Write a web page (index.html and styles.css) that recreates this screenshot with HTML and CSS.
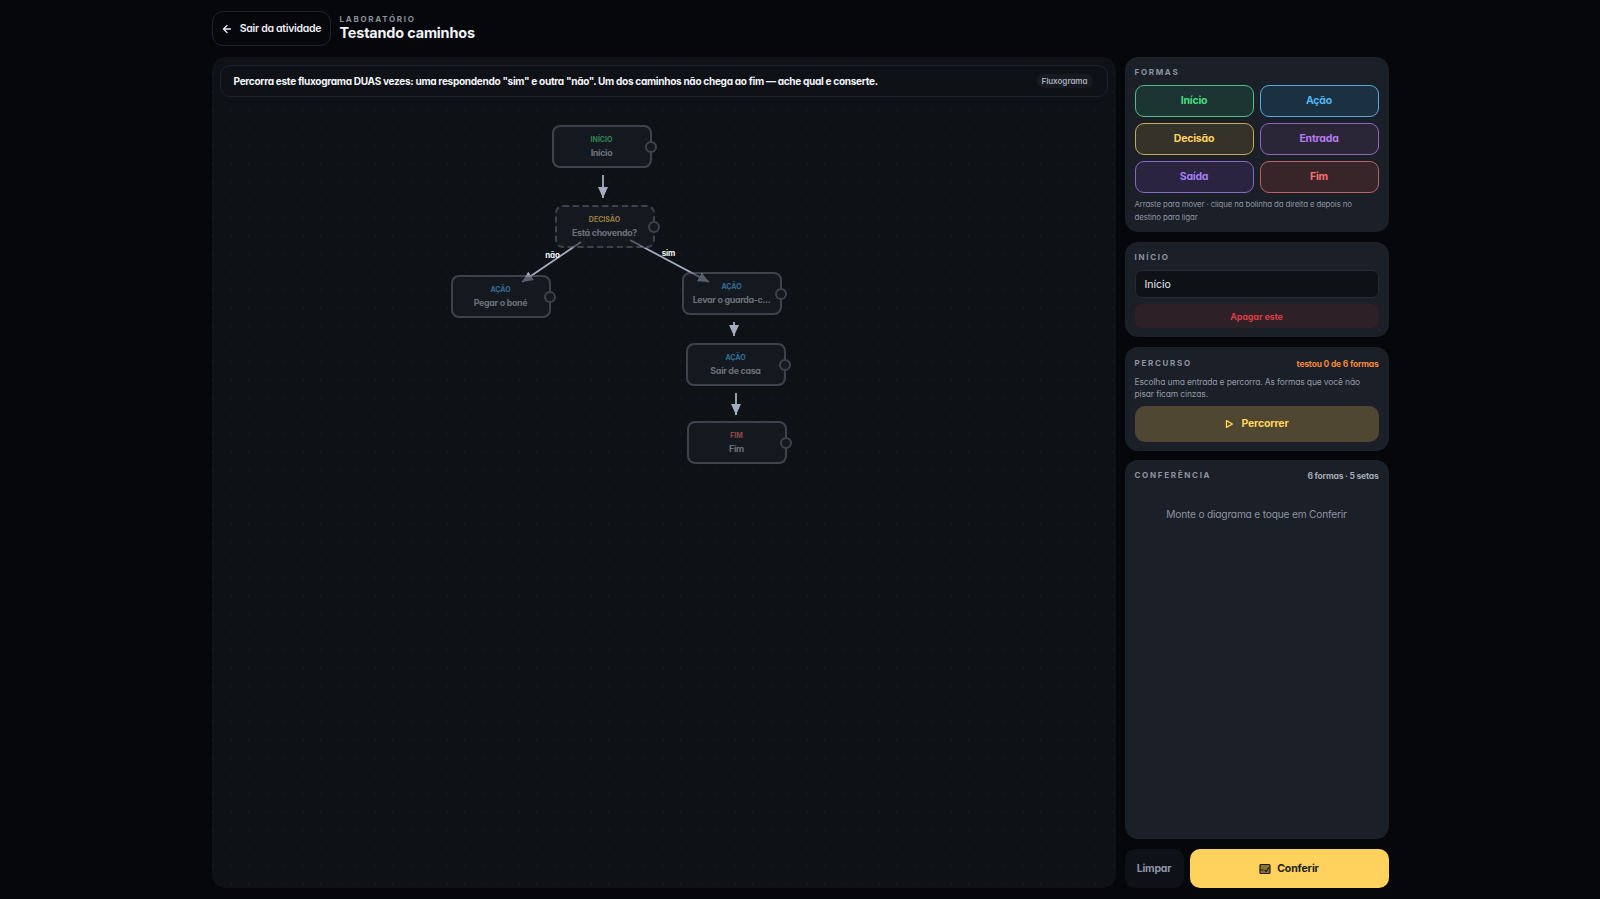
FILE: index.html
```html
<!DOCTYPE html>
<html lang="pt-BR">
<head>
    <meta charset="UTF-8">
    <title>Testando caminhos</title>
    <link rel="stylesheet" href="styles.css">
</head>
<body>
    <div class="page">
        <header class="topbar">
            <button class="back-btn">
                <svg width="12" height="12" viewBox="0 0 24 24" fill="none" stroke="currentColor" stroke-width="2.6" stroke-linecap="round" stroke-linejoin="round"><path d="M19 12H5M12 19l-7-7 7-7"/></svg>
                Sair da atividade
            </button>
            <div class="title-block">
                <div class="eyebrow">LABORATÓRIO</div>
                <h1>Testando caminhos</h1>
            </div>
        </header>

        <div class="workspace">
            <!-- Canvas -->
            <main class="board">
                <div class="banner">
                    <p>Percorra este fluxograma DUAS vezes: uma respondendo "sim" e outra "não". Um dos caminhos não chega ao fim — ache qual e conserte.</p>
                    <span class="badge">Fluxograma</span>
                </div>
                <div class="stage">
                    <svg class="arrows" width="880" height="780">
                        <defs>
                            <marker id="head" markerUnits="userSpaceOnUse" markerWidth="12" markerHeight="10" refX="11" refY="5" orient="auto">
                                <path d="M0 0L11 5L0 10Z" fill="#a4adbf"/>
                            </marker>
                        </defs>
                        <line x1="383" y1="78" x2="383" y2="101" marker-end="url(#head)"/>
                        <line x1="361" y1="145" x2="302" y2="185" marker-end="url(#head)"/>
                        <line x1="410" y1="143" x2="489" y2="185" marker-end="url(#head)"/>
                        <line x1="514" y1="225" x2="514" y2="239" marker-end="url(#head)"/>
                        <line x1="516" y1="296" x2="516" y2="318" marker-end="url(#head)"/>
                    </svg>
                    <span class="edge-label edge-nao">não</span>
                    <span class="edge-label edge-sim">sim</span>

                    <div class="node node-1"><small class="c-green">INÍCIO</small><b>Início</b><i></i></div>
                    <div class="node node-2 dashed"><small class="c-yellow">DECISÃO</small><b>Está chovendo?</b><i></i></div>
                    <div class="node node-3"><small class="c-blue">AÇÃO</small><b>Pegar o boné</b><i></i></div>
                    <div class="node node-4"><small class="c-blue">AÇÃO</small><b>Levar o guarda-c...</b><i></i></div>
                    <div class="node node-5"><small class="c-blue">AÇÃO</small><b>Sair de casa</b><i></i></div>
                    <div class="node node-6"><small class="c-red">FIM</small><b>Fim</b><i></i></div>
                </div>
            </main>

            <!-- Side panels -->
            <aside class="side">
                <section class="card card-shapes">
                    <h4>FORMAS</h4>
                    <div class="shape-grid">
                        <button class="shape s-green">Início</button>
                        <button class="shape s-blue">Ação</button>
                        <button class="shape s-yellow">Decisão</button>
                        <button class="shape s-purple">Entrada</button>
                        <button class="shape s-violet">Saída</button>
                        <button class="shape s-red">Fim</button>
                    </div>
                    <p class="hint">Arraste para mover · clique na bolinha da direita e depois no destino para ligar</p>
                </section>

                <section class="card card-edit">
                    <h4>INÍCIO</h4>
                    <input class="text-input" type="text" value="Início">
                    <button class="delete-btn">Apagar este</button>
                </section>

                <section class="card card-route">
                    <div class="card-head">
                        <h4>PERCURSO</h4>
                        <span class="count-orange">testou 0 de 6 formas</span>
                    </div>
                    <p class="route-text">Escolha uma entrada e percorra. As formas que você não pisar ficam cinzas.</p>
                    <button class="run-btn">
                        <svg width="10" height="10" viewBox="0 0 24 24" fill="none" stroke="currentColor" stroke-width="3.4" stroke-linejoin="round"><path d="M6 4l14 8-14 8z"/></svg>
                        Percorrer
                    </button>
                </section>

                <section class="card card-check">
                    <div class="card-head">
                        <h4>CONFERÊNCIA</h4>
                        <span class="count-gray">6 formas · 5 setas</span>
                    </div>
                    <p class="empty">Monte o diagrama e toque em Conferir</p>
                </section>

                <div class="actions">
                    <button class="clear-btn">Limpar</button>
                    <button class="check-btn">
                        <svg width="12" height="12" viewBox="0 0 24 24" fill="#8a7434" stroke="currentColor" stroke-width="2.4" stroke-linecap="round" stroke-linejoin="round"><rect x="2" y="3" width="20" height="18" rx="2"/><path d="M2 14h6M12 15l2.5 2L19 10"/></svg>
                        Conferir
                    </button>
                </div>
            </aside>
        </div>
    </div>
</body>
</html>
```
FILE: styles.css
```css
* { box-sizing: border-box; }
html, body { height: 100%; }
body { margin: 0; background: #06070b; color: #f2f4f8; font-family: Inter, "Noto Sans", sans-serif; font-feature-settings: "cv11" 1; overflow: hidden; }
button { font-family: inherit; font-feature-settings: inherit; cursor: pointer; }

.page { width: 1177px; height: 899px; margin: 0 auto; padding: 11px 0; display: flex; flex-direction: column; }

/* Top bar */
.topbar { display: flex; align-items: center; gap: 9px; height: 35px; margin-bottom: 11px; }
.back-btn { width: 119px; height: 35px; display: flex; align-items: center; justify-content: center; gap: 7px; background: #06070b; color: #eceef3; border: 1px solid #1f232c; border-radius: 11px; font-size: 10.5px; font-weight: 600; letter-spacing: -.3px; padding: 0; }
.title-block { margin-top: -2px; }
.eyebrow { font-size: 8px; font-weight: 700; letter-spacing: 1.7px; color: #8a8f9b; line-height: 10px; }
h1 { margin: 0; font-size: 14.4px; line-height: 17px; font-weight: 700; color: #f2f4f8; font-feature-settings: normal; letter-spacing: -.15px; }

.workspace { flex: 1; display: flex; gap: 9px; min-height: 0; }

/* Canvas */
.board { width: 904px; padding: 8px; display: flex; flex-direction: column; border-radius: 14px; background-color: #0e1217; background-image: radial-gradient(#13171e 1px, transparent 1px); background-size: 18px 18px; background-position: -8px 8px; }
.banner { height: 32px; flex: none; display: flex; align-items: center; justify-content: space-between; padding: 0 14px 0 13px; border: 1px solid #1d222b; border-radius: 10px; background: #0e1217; }
.banner p { margin: 0 0 1px; font-size: 10.05px; font-weight: 700; letter-spacing: -.3px; color: #f2f4f8; }
.badge { width: 56px; height: 14px; display: flex; align-items: center; justify-content: center; border-radius: 7px; background: #161a21; color: #a7adb9; font-size: 8px; font-weight: 600; }

.stage { position: relative; flex: 1; }
.arrows { position: absolute; left: 0; top: 0; }
.arrows line { stroke: #a4adbf; stroke-width: 1.8; }
.edge-label { position: absolute; transform: translate(-50%, -50%); font-size: 8px; font-weight: 700; letter-spacing: -.2px; color: #f2f4f8; }
.edge-nao { left: 333px; top: 158px; }
.edge-sim { left: 449px; top: 156px; }

.node { position: absolute; width: 100px; height: 43px; display: flex; flex-direction: column; align-items: center; justify-content: center; gap: 3px; background: #1a1f28; border: 2px solid #666b77; border-radius: 8px; opacity: .55; }
.node small { font-size: 7px; line-height: 9px; font-weight: 700; }
.node b { font-size: 8.9px; line-height: 12px; font-weight: 700; letter-spacing: -.3px; color: #b8bcc6; white-space: nowrap; }
.node i { position: absolute; right: -7px; top: 50%; width: 12px; height: 12px; margin-top: -6px; border-radius: 50%; background: #1a1f28; border: 2px solid #666b77; }
.node.dashed { border-style: dashed; }
.node-1 { left: 332px; top: 28px; }
.node-2 { left: 335px; top: 108px; }
.node-3 { left: 231px; top: 178px; }
.node-4 { left: 462px; top: 175px; }
.node-5 { left: 466px; top: 246px; }
.node-6 { left: 467px; top: 324px; }
.c-green { color: #4ade80; }
.c-yellow { color: #ffd25e; }
.c-blue { color: #4fb6f2; }
.c-red { color: #f87171; }

/* Side */
.side { width: 264px; display: flex; flex-direction: column; gap: 10px; }
.card { background: #1a1f28; border-radius: 13px; padding: 10px; }
.card h4 { margin: 0; font-size: 8px; line-height: 11px; font-weight: 700; letter-spacing: 1.7px; color: #8d93a0; }
.card-shapes { height: 175px; }
.shape-grid { display: grid; grid-template-columns: 1fr 1fr; grid-auto-rows: 32px; gap: 6px; margin-top: 7px; }
.shape { border: 1.5px solid; border-radius: 9px; font-size: 10.5px; font-weight: 700; letter-spacing: -.2px; padding: 0 0 2px; }
.s-green { color: #4ade80; border-color: #4fbf88; background: #1c3532; }
.s-blue { color: #4fb6f2; border-color: #54ace0; background: #1b3040; }
.s-yellow { color: #ffd25e; border-color: #c9a84f; background: #35322a; }
.s-purple { color: #b57bf0; border-color: #8d66bd; background: #2b2538; }
.s-violet { color: #a97bf5; border-color: #8867c4; background: #2a2440; }
.s-red { color: #f87171; border-color: #b96161; background: #372529; }
.hint { margin: 5px 0 0; font-size: 7.9px; line-height: 12.5px; letter-spacing: -.15px; color: #8d93a0; }

.card-edit { height: 95px; }
.text-input { display: block; width: 100%; height: 28px; margin-top: 7px; padding: 0 9px; background: #0e1217; border: 1px solid #252a34; border-radius: 7px; color: #e6e9ef; font-family: inherit; font-feature-settings: inherit; font-size: 10.5px; outline: none; }
.delete-btn { display: block; width: 100%; height: 24px; margin-top: 6px; border: none; border-radius: 7px; background: #2d2026; color: #d63d46; font-size: 9px; font-weight: 700; letter-spacing: -.15px; }

.card-route { height: 104px; padding-top: 11px; }
.card-head { display: flex; justify-content: space-between; align-items: center; }
.count-orange { font-size: 8.5px; font-weight: 700; letter-spacing: -.2px; color: #f5873a; }
.count-gray { font-size: 8.5px; font-weight: 700; letter-spacing: -.2px; color: #a3a9b5; }
.route-text { margin: 8px 0 0; font-size: 8.5px; line-height: 11.5px; letter-spacing: -.15px; color: #9299a6; }
.run-btn { width: 100%; height: 36px; margin-top: 6px; display: flex; align-items: center; justify-content: center; gap: 7px; border: none; border-radius: 10px; background: #4f4731; color: #ffd25e; font-size: 10.5px; font-weight: 700; letter-spacing: -.15px; padding: 0 0 1px; }

.card-check { flex: 1; margin-top: -1px; }
.empty { margin: 27px 0 0; text-align: center; font-size: 10.2px; letter-spacing: -.2px; color: #8d93a0; }

.actions { height: 39px; display: flex; gap: 6px; }
.clear-btn { width: 59px; border: none; border-radius: 10px; background: #0e1218; color: #8d93a8; font-size: 10.5px; font-weight: 700; letter-spacing: -.2px; padding: 0; }
.check-btn { flex: 1; display: flex; align-items: center; justify-content: center; gap: 6px; border: none; border-radius: 10px; background: #ffd25e; color: #201d14; font-size: 10.5px; font-weight: 700; letter-spacing: -.1px; }
```
